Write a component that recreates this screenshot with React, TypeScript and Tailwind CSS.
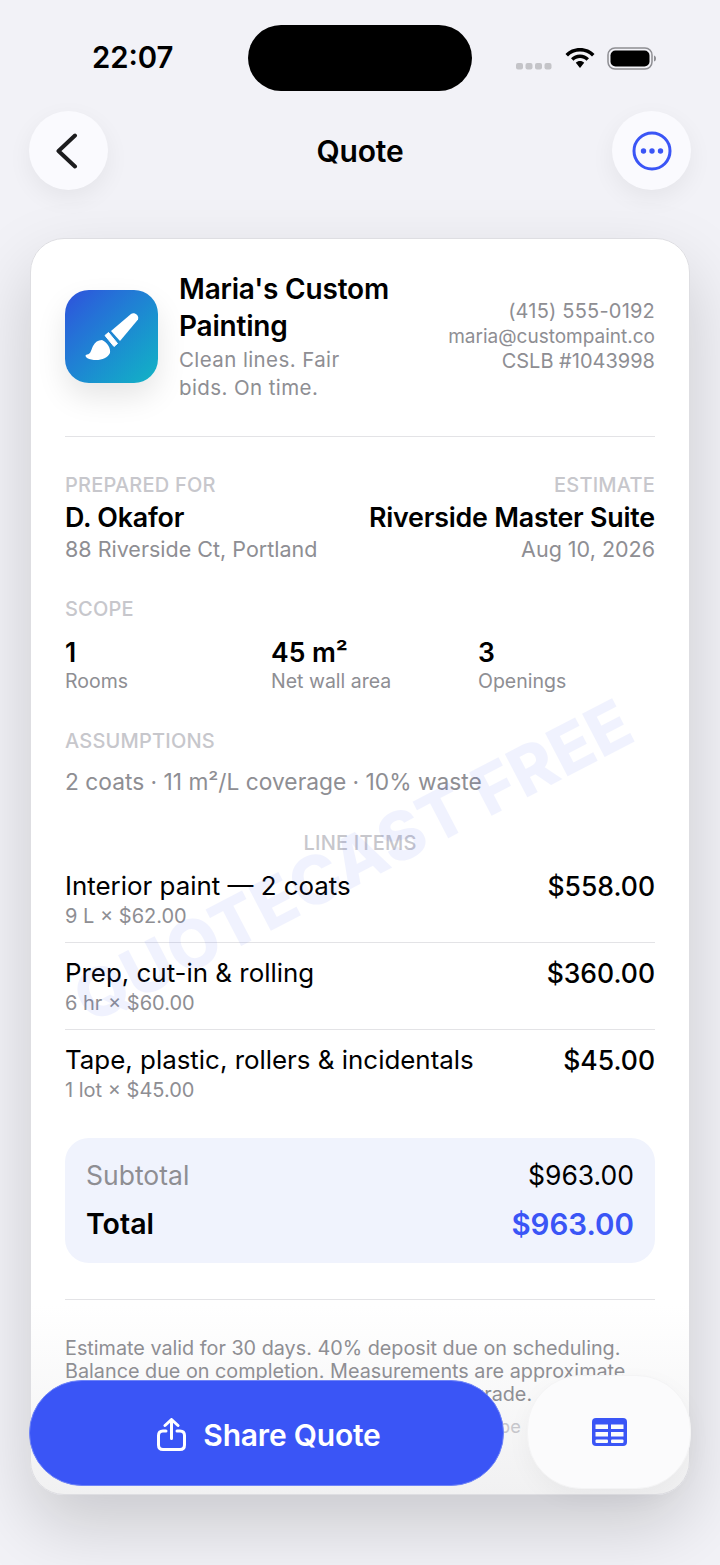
import React from "react";

const items = [
  { name: "Interior paint — 2 coats", sub: "9 L × $62.00", price: "$558.00" },
  { name: "Prep, cut-in & rolling", sub: "6 hr × $60.00", price: "$360.00" },
  { name: "Tape, plastic, rollers & incidentals", sub: "1 lot × $45.00", price: "$45.00" },
];

const stats = [
  { v: "1", l: "Rooms" },
  { v: "45 m²", l: "Net wall area" },
  { v: "3", l: "Openings" },
];

function Label({ children, className = "" }: { children: React.ReactNode; className?: string }) {
  return <div className={`text-[20px] leading-[24px] font-medium tracking-[0.2px] text-[#c7c7cc] ${className}`}>{children}</div>;
}

export default function App() {
  return (
    <div className="relative h-[1565px] w-[720px] overflow-hidden bg-[#f2f2f7] font-['Inter',sans-serif] text-black">
      {/* status bar */}
      <div className="flex h-[111px] items-start">
        <div className="mt-[40px] ml-[92px] w-[156px] text-[29.300px] leading-[36px] font-semibold">22:07</div>
        <div className="mt-[25px] h-[66px] w-[224px] rounded-[33px] bg-black" />
        <div className="mt-[46px] ml-[44px] flex items-start">
          <svg width="36" height="7" viewBox="0 0 36 7" className="mt-[17px]">
            <rect x="0" y="0" width="7" height="6.500" rx="2" fill="#c4c4c8" />
            <rect x="9.500" y="0" width="7" height="6.500" rx="2" fill="#c4c4c8" />
            <rect x="19" y="0" width="7" height="6.500" rx="2" fill="#c4c4c8" />
            <rect x="28.500" y="0" width="7" height="6.500" rx="2" fill="#c4c4c8" />
          </svg>
          <svg width="32" height="24" viewBox="0 0 32 24" className="ml-[12px]">
            <path d="M16 2C10 2 5 4.300 1.500 8L4 10.500C7 7.500 11.300 5.600 16 5.600S25 7.500 28 10.500L30.500 8C27 4.300 22 2 16 2Z" fill="#000" />
            <path d="M16 8.500C12.500 8.500 9.300 9.900 7 12.200L9.500 14.700C11.200 13 13.500 12 16 12S20.800 13 22.500 14.700L25 12.200C22.700 9.900 19.500 8.500 16 8.500Z" fill="#000" />
            <path d="M16 15C14.300 15 12.900 15.600 11.800 16.700L16 22L20.200 16.700C19.100 15.600 17.700 15 16 15Z" fill="#000" />
          </svg>
          <svg width="50" height="24" viewBox="0 0 50 24" className="ml-[11px]">
            <rect x="1" y="2" width="44" height="21" rx="7" fill="none" stroke="#8e8e93" strokeWidth="1.500" />
            <rect x="3.500" y="4.500" width="39" height="16" rx="5" fill="#000" />
            <path d="M47 9.500C48.500 10 49 11 49 12.500S48.500 15 47 15.500Z" fill="#8e8e93" />
          </svg>
        </div>
      </div>

      {/* nav */}
      <div className="flex h-[79px] items-center justify-between px-[29px]">
        <div className="flex h-[79px] w-[79px] items-center justify-center rounded-full bg-[#fafafe] shadow-[0_8px_24px_rgba(0,0,0,0.06)]">
          <svg width="26" height="36" viewBox="0 0 26 36" fill="none" className="mr-[5px]">
            <path d="M22 2.500L5.500 18L22 33.500" stroke="#1c1c1e" strokeWidth="4" strokeLinecap="round" strokeLinejoin="round" />
          </svg>
        </div>
        <div className="text-[30px] leading-[36px] font-semibold tracking-[-0.2px]">Quote</div>
        <div className="flex h-[79px] w-[79px] items-center justify-center rounded-full bg-[#fafafe] shadow-[0_8px_24px_rgba(0,0,0,0.06)]">
          <svg width="40" height="40" viewBox="0 0 40 40" fill="none">
            <circle cx="20" cy="20" r="18" stroke="#3a55f6" strokeWidth="3" />
            <circle cx="11.500" cy="20" r="2.700" fill="#3a55f6" />
            <circle cx="20" cy="20" r="2.700" fill="#3a55f6" />
            <circle cx="28.500" cy="20" r="2.700" fill="#3a55f6" />
          </svg>
        </div>
      </div>

      {/* card */}
      <div className="relative mx-[30px] mt-[48px] h-[1257px] overflow-hidden rounded-[34px] border border-[#dedee2] bg-gradient-to-b from-white from-[85%] to-[#f1f1f2] px-[34px] shadow-[0_30px_70px_rgba(0,0,0,0.17)]">
        {/* watermark */}
        <div className="pointer-events-none absolute top-[590px] left-[14px] w-[600px] -rotate-[27.5deg] text-center text-[67px] leading-[72px] font-extrabold tracking-[1px] whitespace-nowrap text-[#3a55f6] opacity-[0.07]">
          QUOTECAST FREE
        </div>

        {/* header */}
        <div className="flex h-[198px] items-start border-b border-[#e3e3e6]">
          <div className="mt-[51px] h-[93px] w-[93px] shrink-0 rounded-[24px] bg-gradient-to-br from-[#2f4fdc] to-[#14b4c4] shadow-[0_14px_30px_rgba(0,0,0,0.10)]">
            <svg width="93" height="93" viewBox="0 0 93 93" fill="#fff">
              <path d="M66 24C69 22 74.500 25 73 29.500L55 51L46 41Z" />
              <path d="M43.500 42.500L40 45.500L49 56.500L52.500 53.500Z" strokeLinejoin="round" stroke="#fff" strokeWidth="1" />
              <path d="M37 50C42 52 46 58 45 63C42 70 30 72 22 68C20 66 20 65 22 64.500C26 64 26 60 28 56C30 52 33 50 37 50Z" />
            </svg>
          </div>
          <div className="mt-[32px] ml-[21px] w-[226px]">
            <div className="text-[28px] leading-[37px] font-semibold tracking-[-0.2px]">Maria's Custom Painting</div>
            <div className="mt-[1px] w-[180px] text-[20.500px] leading-[28px] tracking-[0.4px] text-[#8e8e93]">Clean lines. Fair bids. On time.</div>
          </div>
          <div className="mt-[60px] flex-1 text-right text-[19px] leading-[25px] text-[#8e8e93]">
            <div className="text-[20px] tracking-[0.2px]">(415) 555-0192</div>
            <div>maria@custompaint.co</div>
            <div className="text-[20px]">CSLB #1043998</div>
          </div>
        </div>

        {/* prepared */}
        <div className="mt-[36px] flex justify-between">
          <div>
            <Label>PREPARED FOR</Label>
            <div className="mt-[3px] text-[26.800px] leading-[34px] font-semibold tracking-[-0.2px]">D. Okafor</div>
            <div className="mt-[1px] text-[21.500px] leading-[28px] text-[#8e8e93]">88 Riverside Ct, Portland</div>
          </div>
          <div className="text-right">
            <Label>ESTIMATE</Label>
            <div className="mt-[3px] text-[26.800px] leading-[34px] font-semibold tracking-[-0.2px]">Riverside Master Suite</div>
            <div className="mt-[1px] text-[21.500px] leading-[28px] text-[#8e8e93]">Aug 10, 2026</div>
          </div>
        </div>

        {/* scope */}
        <Label className="mt-[34px]">SCOPE</Label>
        <div className="mt-[14px] grid grid-cols-[206px_207px_1fr]">
          {stats.map((s) => (
            <div key={s.l}>
              <div className="text-[26.500px] leading-[34px] font-semibold">{s.v}</div>
              <div className="mt-[1px] text-[19.500px] leading-[22px] text-[#8e8e93]">{s.l}</div>
            </div>
          ))}
        </div>

        {/* assumptions */}
        <Label className="mt-[37px]">ASSUMPTIONS</Label>
        <div className="mt-[13px] text-[22.750px] leading-[32px] text-[#8e8e93]">2 coats · 11 m²/L coverage · 10% waste</div>

        {/* items */}
        <Label className="mt-[33px] text-center">LINE ITEMS</Label>
        <div className="mt-[1px]">
          {items.map((it, i) => (
            <div key={it.name} className={`flex h-[87px] items-start justify-between ${i < 2 ? "border-b border-[#e3e3e6]" : ""}`}>
              <div>
                <div className="mt-[13px] text-[25.900px] leading-[34px]">{it.name}</div>
                <div className="text-[20px] leading-[26px] text-[#8e8e93]">{it.sub}</div>
              </div>
              <div className="mt-[13px] text-[26.500px] leading-[34px] font-medium">{it.price}</div>
            </div>
          ))}
        </div>

        {/* totals */}
        <div className="mt-[21px] h-[125px] rounded-[24px] bg-[#f0f3fd] px-[21px] pt-[19px]">
          <div className="flex items-center justify-between text-[26.500px] leading-[36px]">
            <span className="text-[#8e8e93]">Subtotal</span>
            <span>$963.00</span>
          </div>
          <div className="mt-[12px] flex items-center justify-between leading-[38px] font-semibold">
            <span className="text-[28.500px]">Total</span>
            <span className="text-[29.500px] text-[#3a55f6]">$963.00</span>
          </div>
        </div>

        <div className="mt-[36px] border-t border-[#e3e3e6]" />

        {/* footer */}
        <div className="mt-[37px] text-[19.800px] leading-[23px] text-[#8e8e93]">
          <div>Estimate valid for 30 days. 40% deposit due on scheduling.</div>
          <div>Balance due on completion. Measurements are approximate</div>
          <div>Final price is set after walkthrough of paint-grade.</div>
          <div className="mt-[9px] text-[18.200px] text-[#c7c7cc]">Additional work billed as change order outside scope</div>
        </div>
      </div>

      {/* bottom buttons */}
      <div className="absolute top-[1380px] left-[29px] flex h-[106px] w-[475px] items-center justify-center gap-[17px] rounded-full border border-[#6d83f8] bg-[#3a55f6] pl-[5px]">
        <svg width="29" height="33" viewBox="0 0 29 33" fill="none" stroke="#fff" strokeWidth="3" strokeLinecap="round" strokeLinejoin="round" className="mt-[2px]">
          <path d="M9 13H6C3 13 1.500 14.500 1.500 17.500V27C1.500 30 3 31.500 6 31.500H23C26 31.500 27.500 30 27.500 27V17.500C27.500 14.500 26 13 23 13H20" />
          <path d="M14.500 20.500V1.500M8 7.500L14.500 1.500L21 7.500" />
        </svg>
        <span className="mt-[4px] text-[30px] leading-[36px] font-semibold tracking-[-0.2px] text-white">Share Quote</span>
      </div>
      <div className="absolute top-[1375px] left-[527px] flex h-[114px] w-[164px] items-center justify-center rounded-[54px] border border-[#f4f4f5] bg-[#fbfbfc] shadow-[0_8px_24px_rgba(0,0,0,0.04)]">
        <svg width="35" height="28" viewBox="0 0 35 28" className="mb-[1px]">
          <rect x="0" y="0" width="35" height="28" rx="4" fill="#3a55f6" />
          <rect x="3.500" y="6.500" width="12.500" height="4.500" fill="#fbfbfc" />
          <rect x="19" y="6.500" width="12.500" height="4.500" fill="#fbfbfc" />
          <rect x="3.500" y="14" width="12.500" height="4.500" fill="#fbfbfc" />
          <rect x="19" y="14" width="12.500" height="4.500" fill="#fbfbfc" />
          <rect x="3.500" y="21.500" width="12.500" height="3.500" rx="1" fill="#fbfbfc" />
          <rect x="19" y="21.500" width="12.500" height="3.500" rx="1" fill="#fbfbfc" />
        </svg>
      </div>
    </div>
  );
}
